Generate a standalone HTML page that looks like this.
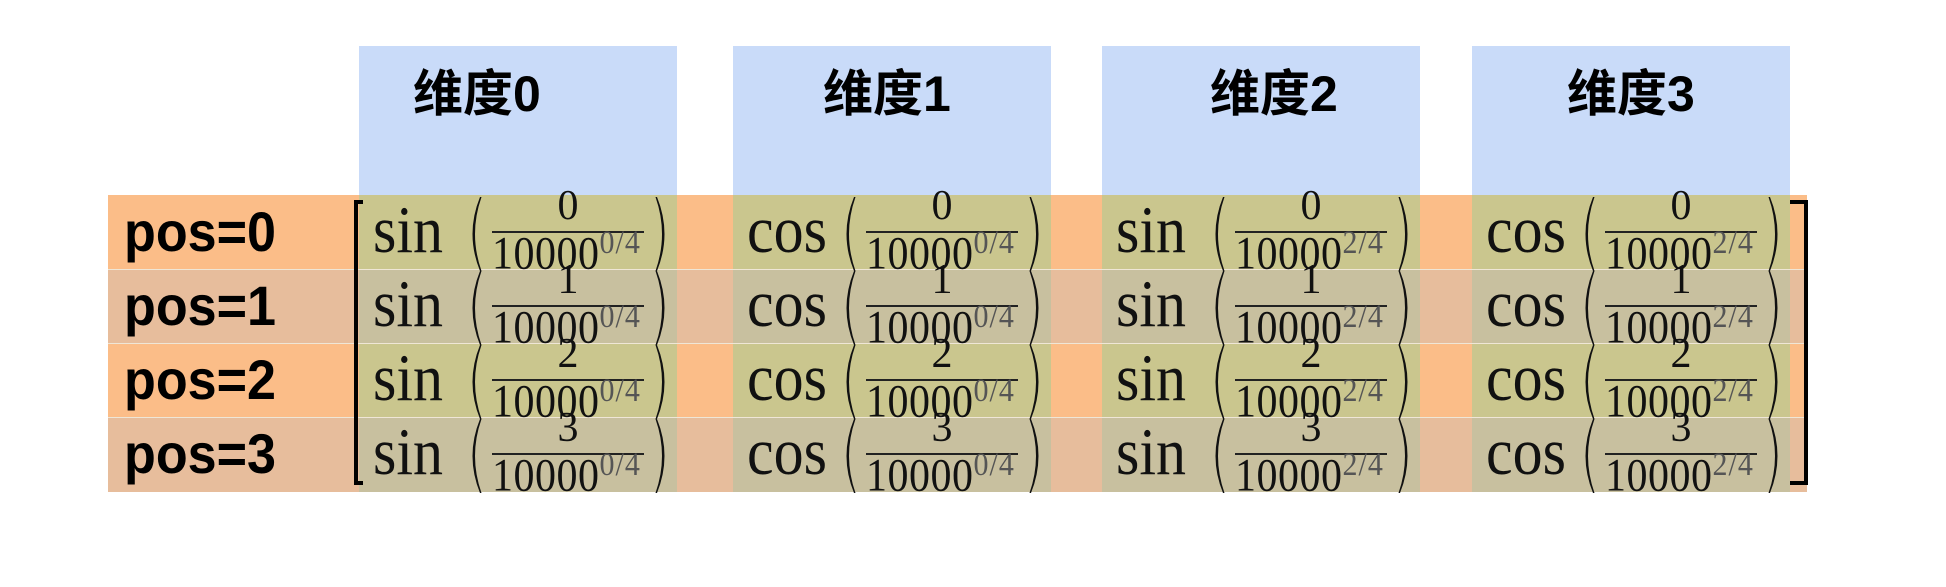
<!DOCTYPE html>
<html><head><meta charset="utf-8"><style>
body{margin:0;width:1946px;height:587px;background:#fff;position:relative;overflow:hidden}
div{position:absolute}
.hb{background:#c9dbf9;top:46px;height:150px;width:318px}
.ht{top:64px;font:bold 50px "Liberation Sans","Noto Sans CJK SC",sans-serif;color:#000;white-space:nowrap;line-height:1.2}
.r{left:108px;width:1699px;height:74px}
.o{background:#fbbd88}.t{background:#e7bd9c}
.ov{width:318px;height:74px}
.ov.o{background:#cac68e}.ov.t{background:#c8c09f}
.sep{left:108px;width:1699px;height:1px;background:#efe6d6}
.pl{left:124px;font:bold 56px "Liberation Sans",sans-serif;line-height:1;color:#000;white-space:nowrap;transform:scaleX(0.93);transform-origin:left}
.c{width:318px;height:74px;font-family:"Liberation Serif",serif;color:#111}
.fn{left:14px;top:1px;font-size:60px;line-height:1;transform:scaleY(1.12);transform-origin:top}
.num{left:133px;width:152px;text-align:center;top:-10px;font-size:42px;line-height:1}
.bar{left:133px;top:36px;width:152px;height:2px;background:#222}
.den{left:133px;top:36px;font-size:42px;line-height:1;white-space:nowrap;letter-spacing:0.5px;transform:scaleY(1.1);transform-origin:top}
.den span{font-size:30px;color:#555;position:relative;top:-14px;letter-spacing:1px}
.pa{top:2px}
.br{background:#000}
</style></head><body>
<div class="hb" style="left:359px"></div>
<div class="hb" style="left:733px"></div>
<div class="hb" style="left:1102px"></div>
<div class="hb" style="left:1472px"></div>
<div class="ht" style="left:413px">维度0</div>
<div class="ht" style="left:823px">维度1</div>
<div class="ht" style="left:1210px">维度2</div>
<div class="ht" style="left:1567px">维度3</div>

<div class="r o" style="top:195px"></div>
<div class="r t" style="top:269px"></div>
<div class="r o" style="top:343px"></div>
<div class="r t" style="top:417px;height:75px"></div>

<div class="ov o" style="left:359px;top:195px"></div><div class="ov o" style="left:733px;top:195px"></div><div class="ov o" style="left:1102px;top:195px"></div><div class="ov o" style="left:1472px;top:195px"></div>
<div class="ov t" style="left:359px;top:269px"></div><div class="ov t" style="left:733px;top:269px"></div><div class="ov t" style="left:1102px;top:269px"></div><div class="ov t" style="left:1472px;top:269px"></div>
<div class="ov o" style="left:359px;top:343px"></div><div class="ov o" style="left:733px;top:343px"></div><div class="ov o" style="left:1102px;top:343px"></div><div class="ov o" style="left:1472px;top:343px"></div>
<div class="ov t" style="left:359px;top:417px;height:75px"></div><div class="ov t" style="left:733px;top:417px;height:75px"></div><div class="ov t" style="left:1102px;top:417px;height:75px"></div><div class="ov t" style="left:1472px;top:417px;height:75px"></div>

<div class="sep" style="top:269px"></div>
<div class="sep" style="top:343px"></div>
<div class="sep" style="top:417px"></div>

<div class="pl" style="top:204px">pos=0</div>
<div class="pl" style="top:278px">pos=1</div>
<div class="pl" style="top:352px">pos=2</div>
<div class="pl" style="top:426px">pos=3</div>

<div class="br" style="left:354px;top:200px;width:4px;height:285px"></div>
<div class="br" style="left:354px;top:200px;width:9px;height:4px"></div>
<div class="br" style="left:354px;top:481px;width:9px;height:4px"></div>
<div class="br" style="left:1804px;top:200px;width:4px;height:285px"></div>
<div class="br" style="left:1790px;top:200px;width:18px;height:4px"></div>
<div class="br" style="left:1790px;top:481px;width:18px;height:4px"></div>

<svg width="0" height="0" style="position:absolute"><defs>
<path id="lp" d="M15 0 Q0 37 15 74 L16.5 74 Q3.5 37 16.5 0 Z" fill="#111"/>
<path id="rp" d="M3 0 Q18 37 3 74 L1.5 74 Q14.5 37 1.5 0 Z" fill="#111"/>
</defs></svg>

<div class="c" style="left:359px;top:195px"><div class="fn">sin</div><svg class="pa" style="position:absolute;left:106px" width="20" height="76"><use href="#lp"/></svg><div class="num">0</div><div class="bar"></div><div class="den">10000<span>0/4</span></div><svg class="pa" style="position:absolute;left:295px" width="20" height="76"><use href="#rp"/></svg></div>
<div class="c" style="left:733px;top:195px"><div class="fn">cos</div><svg class="pa" style="position:absolute;left:106px" width="20" height="76"><use href="#lp"/></svg><div class="num">0</div><div class="bar"></div><div class="den">10000<span>0/4</span></div><svg class="pa" style="position:absolute;left:295px" width="20" height="76"><use href="#rp"/></svg></div>
<div class="c" style="left:1102px;top:195px"><div class="fn">sin</div><svg class="pa" style="position:absolute;left:106px" width="20" height="76"><use href="#lp"/></svg><div class="num">0</div><div class="bar"></div><div class="den">10000<span>2/4</span></div><svg class="pa" style="position:absolute;left:295px" width="20" height="76"><use href="#rp"/></svg></div>
<div class="c" style="left:1472px;top:195px"><div class="fn">cos</div><svg class="pa" style="position:absolute;left:106px" width="20" height="76"><use href="#lp"/></svg><div class="num">0</div><div class="bar"></div><div class="den">10000<span>2/4</span></div><svg class="pa" style="position:absolute;left:295px" width="20" height="76"><use href="#rp"/></svg></div>

<div class="c" style="left:359px;top:269px"><div class="fn">sin</div><svg class="pa" style="position:absolute;left:106px" width="20" height="76"><use href="#lp"/></svg><div class="num">1</div><div class="bar"></div><div class="den">10000<span>0/4</span></div><svg class="pa" style="position:absolute;left:295px" width="20" height="76"><use href="#rp"/></svg></div>
<div class="c" style="left:733px;top:269px"><div class="fn">cos</div><svg class="pa" style="position:absolute;left:106px" width="20" height="76"><use href="#lp"/></svg><div class="num">1</div><div class="bar"></div><div class="den">10000<span>0/4</span></div><svg class="pa" style="position:absolute;left:295px" width="20" height="76"><use href="#rp"/></svg></div>
<div class="c" style="left:1102px;top:269px"><div class="fn">sin</div><svg class="pa" style="position:absolute;left:106px" width="20" height="76"><use href="#lp"/></svg><div class="num">1</div><div class="bar"></div><div class="den">10000<span>2/4</span></div><svg class="pa" style="position:absolute;left:295px" width="20" height="76"><use href="#rp"/></svg></div>
<div class="c" style="left:1472px;top:269px"><div class="fn">cos</div><svg class="pa" style="position:absolute;left:106px" width="20" height="76"><use href="#lp"/></svg><div class="num">1</div><div class="bar"></div><div class="den">10000<span>2/4</span></div><svg class="pa" style="position:absolute;left:295px" width="20" height="76"><use href="#rp"/></svg></div>

<div class="c" style="left:359px;top:343px"><div class="fn">sin</div><svg class="pa" style="position:absolute;left:106px" width="20" height="76"><use href="#lp"/></svg><div class="num">2</div><div class="bar"></div><div class="den">10000<span>0/4</span></div><svg class="pa" style="position:absolute;left:295px" width="20" height="76"><use href="#rp"/></svg></div>
<div class="c" style="left:733px;top:343px"><div class="fn">cos</div><svg class="pa" style="position:absolute;left:106px" width="20" height="76"><use href="#lp"/></svg><div class="num">2</div><div class="bar"></div><div class="den">10000<span>0/4</span></div><svg class="pa" style="position:absolute;left:295px" width="20" height="76"><use href="#rp"/></svg></div>
<div class="c" style="left:1102px;top:343px"><div class="fn">sin</div><svg class="pa" style="position:absolute;left:106px" width="20" height="76"><use href="#lp"/></svg><div class="num">2</div><div class="bar"></div><div class="den">10000<span>2/4</span></div><svg class="pa" style="position:absolute;left:295px" width="20" height="76"><use href="#rp"/></svg></div>
<div class="c" style="left:1472px;top:343px"><div class="fn">cos</div><svg class="pa" style="position:absolute;left:106px" width="20" height="76"><use href="#lp"/></svg><div class="num">2</div><div class="bar"></div><div class="den">10000<span>2/4</span></div><svg class="pa" style="position:absolute;left:295px" width="20" height="76"><use href="#rp"/></svg></div>

<div class="c" style="left:359px;top:417px"><div class="fn">sin</div><svg class="pa" style="position:absolute;left:106px" width="20" height="76"><use href="#lp"/></svg><div class="num">3</div><div class="bar"></div><div class="den">10000<span>0/4</span></div><svg class="pa" style="position:absolute;left:295px" width="20" height="76"><use href="#rp"/></svg></div>
<div class="c" style="left:733px;top:417px"><div class="fn">cos</div><svg class="pa" style="position:absolute;left:106px" width="20" height="76"><use href="#lp"/></svg><div class="num">3</div><div class="bar"></div><div class="den">10000<span>0/4</span></div><svg class="pa" style="position:absolute;left:295px" width="20" height="76"><use href="#rp"/></svg></div>
<div class="c" style="left:1102px;top:417px"><div class="fn">sin</div><svg class="pa" style="position:absolute;left:106px" width="20" height="76"><use href="#lp"/></svg><div class="num">3</div><div class="bar"></div><div class="den">10000<span>2/4</span></div><svg class="pa" style="position:absolute;left:295px" width="20" height="76"><use href="#rp"/></svg></div>
<div class="c" style="left:1472px;top:417px"><div class="fn">cos</div><svg class="pa" style="position:absolute;left:106px" width="20" height="76"><use href="#lp"/></svg><div class="num">3</div><div class="bar"></div><div class="den">10000<span>2/4</span></div><svg class="pa" style="position:absolute;left:295px" width="20" height="76"><use href="#rp"/></svg></div>
</body></html>
